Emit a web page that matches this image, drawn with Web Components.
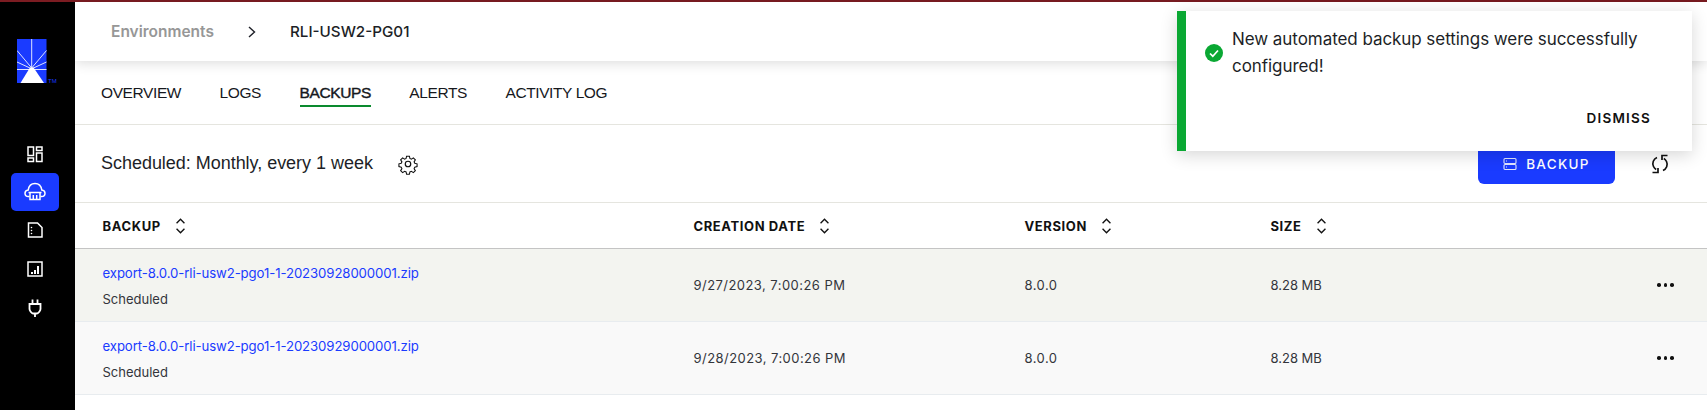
<!doctype html>
<html lang="en">
<head>
<meta charset="utf-8">
<title>Backups</title>
<style>
  html, body { margin: 0; height: 100%; overflow: hidden; background: #fff; }
  body { font-family: Inter, "Liberation Sans", sans-serif; color: #1d1f27; }
</style>
</head>
<body>
<app-shell>
  <side-nav slot="nav"></side-nav>
  <page-header>
    <span slot="parent">Environments</span>
    <span slot="current">RLI-USW2-PG01</span>
  </page-header>
  <tab-bar>
    <tab-item>OVERVIEW</tab-item>
    <tab-item>LOGS</tab-item>
    <tab-item active>BACKUPS</tab-item>
    <tab-item>ALERTS</tab-item>
    <tab-item>ACTIVITY LOG</tab-item>
  </tab-bar>
  <schedule-bar>Scheduled: Monthly, every 1 week</schedule-bar>
  <backup-table>
    <backup-row file="export-8.0.0-rli-usw2-pgo1-1-20230928000001.zip" date="9/27/2023, 7:00:26 PM" version="8.0.0" size="8.28 MB" shade="#f3f4f0"></backup-row>
    <backup-row file="export-8.0.0-rli-usw2-pgo1-1-20230929000001.zip" date="9/28/2023, 7:00:26 PM" version="8.0.0" size="8.28 MB" shade="#f9f9f9"></backup-row>
  </backup-table>
  <toast-notice>New automated backup settings were successfully configured!</toast-notice>
</app-shell>

<script>
  class AppShell extends HTMLElement {
    connectedCallback() {
      const root = this.attachShadow({ mode: "open" });
      root.innerHTML = `
        <style>
          :host { display: flex; flex-direction: column; height: 100vh; position: relative; }
          .stripe { height: 2px; background: #7c1c22; flex: none; }
          .body { display: flex; flex: 1; min-height: 0; }
          main { flex: 1; min-width: 0; display: flex; flex-direction: column; }
        </style>
        <div class="stripe"></div>
        <div class="body">
          <slot name="nav"></slot>
          <main><slot></slot></main>
        </div>
      `;
    }
  }

  class SideNav extends HTMLElement {
    connectedCallback() {
      const root = this.attachShadow({ mode: "open" });
      root.innerHTML = `
        <style>
          :host { display: flex; flex-direction: column; align-items: center; width: 75px; flex: none; background: #000; box-sizing: border-box; padding: 37px 5px 0 0; }
          .logo { display: block; width: 40px; height: 48px; margin: 0 0 48px 4px; }
          .item { width: 48px; height: 38px; border-radius: 5px; display: flex; align-items: center; justify-content: center; }
          .item.on { background: #1a3bff; }
          .item.wide { height: 38.500px; }
          .item.last { height: 40px; }
          svg.icon { width: 20px; height: 20px; fill: none; stroke: #fff; stroke-width: 1.500; }
        </style>
        <svg class="logo" viewBox="0 0 40 48">
          <rect x="0" y="0" width="29.500" height="44" fill="#1a3bff"/>
          <g stroke="#dfe4ff" stroke-width="1" fill="none">
            <path d="M14.700 0V29M0 11.500L14.700 29M29.500 11.500L14.700 29M0 23L14 29.500M29.500 23L15.400 29.500M0 30.500H29.500"/>
          </g>
          <path d="M13 28.500h3.500L27 44H3.500z" fill="#fff"/>
          <text x="31" y="44" font-family="Liberation Sans, sans-serif" font-size="6" fill="#1a3bff">TM</text>
        </svg>
        <div class="item">
          <svg class="icon" viewBox="0 0 20 20">
            <rect x="3" y="3" width="5.500" height="8.500"/><rect x="11.500" y="3" width="5.500" height="3.500"/>
            <rect x="3" y="14" width="5.500" height="3.500"/><rect x="11.500" y="9" width="5.500" height="8.500"/>
          </svg>
        </div>
        <div class="item on">
          <svg class="icon" style="width:22px;height:22px" viewBox="0 0 22 22">
            <path d="M5.500 15.500H4.500C2.500 15.500 1 14 1 12.200c0-1.700 1.400-3 3.200-3.200C4.800 5 7.500 2.500 11 2.500S17.200 5 17.800 9c1.800.2 3.200 1.500 3.200 3.200 0 1.800-1.500 3.300-3.500 3.300H16.500"/>
            <path d="M4.500 11.500H17.500M6 11.500V18.500H16V11.500M9.300 14V18.500M12.700 14V18.500"/>
          </svg>
        </div>
        <div class="item wide">
          <svg class="icon" viewBox="0 0 20 20">
            <path d="M3.500 3H12.500L17 7.500V17H3.500z"/>
            <path d="M6.500 7.500v.01M6.500 10.500v.01M6.500 13.500v.01" stroke-linecap="round" stroke-width="1.600"/>
          </svg>
        </div>
        <div class="item wide">
          <svg class="icon" viewBox="0 0 20 20">
            <rect x="3" y="3" width="14" height="14"/>
            <path d="M7 15v-2M10 15v-4M13 15V7" stroke-width="2"/>
          </svg>
        </div>
        <div class="item last">
          <svg class="icon" viewBox="0 0 20 20" style="stroke-width:1.800">
            <path d="M7.500 1.500V6M12.500 1.500V6M4.500 6H15.500V11C15.500 12.500 13.500 15.500 12 15.500H8C6.500 15.500 4.500 12.500 4.500 11zM10 15.500V19"/>
          </svg>
        </div>
      `;
    }
  }

  class PageHeader extends HTMLElement {
    connectedCallback() {
      const root = this.attachShadow({ mode: "open" });
      root.innerHTML = `
        <style>
          :host { display: flex; align-items: center; height: 59px; flex: none; padding-left: 36px; box-shadow: 0 2px 12px rgba(0,0,0,.14); position: relative; font-size: 15.500px; }
          .parent { color: #979797; font-weight: 600; width: 102px; }
          svg { width: 10px; height: 14px; margin: 0 33px 0 34px; fill: none; stroke: #1d1f27; stroke-width: 1.400; }
          .current { font-weight: 500; color: #1d1f27; font-size: 15.200px; }
        </style>
        <span class="parent"><slot name="parent"></slot></span>
        <svg viewBox="0 0 10 14"><path d="M2 2l5.500 5L2 12"/></svg>
        <span class="current"><slot name="current"></slot></span>
      `;
    }
  }

  class TabBar extends HTMLElement {
    connectedCallback() {
      const root = this.attachShadow({ mode: "open" });
      root.innerHTML = `
        <style>
          :host { display: flex; gap: 38.500px; height: 64px; flex: none; box-sizing: border-box; padding: 0 0 0 26px; border-bottom: 1px solid #e5e5df; }
        </style>
        <slot></slot>
      `;
    }
  }

  class TabItem extends HTMLElement {
    connectedCallback() {
      const root = this.attachShadow({ mode: "open" });
      root.innerHTML = `
        <style>
          :host { display: block; font: 15.500px/18px "Liberation Sans", Arial, sans-serif; color: #16181d; letter-spacing: -.4px; padding-top: 23px; }
          .label { display: block; padding-bottom: 3px; border-bottom: 2px solid transparent; }
          :host([active]) .label { border-bottom-color: #0a8a2e; -webkit-text-stroke: .4px #16181d; }
        </style>
        <span class="label"><slot></slot></span>
      `;
    }
  }

  class ScheduleBar extends HTMLElement {
    connectedCallback() {
      const root = this.attachShadow({ mode: "open" });
      root.innerHTML = `
        <style>
          :host { display: flex; align-items: center; height: 78px; flex: none; box-sizing: border-box; padding: 0 0 0 26px; border-bottom: 1px solid #e5e5df; }
          .label { font: 18px "Liberation Sans", Arial, sans-serif; color: #1d1f27; letter-spacing: -.03px; }
          .gear { width: 22px; height: 22px; margin-left: 24px; fill: none; stroke: #111; stroke-width: 1.300; }
          .backup { margin-left: auto; width: 137px; height: 41px; box-sizing: border-box; border: 0; border-radius: 6px; background: #1a3bff; color: #fff; display: flex; align-items: center; justify-content: center; gap: 9px; font: 500 13.500px Inter, "Liberation Sans", sans-serif; letter-spacing: 1.300px; }
          .backup svg { width: 14px; height: 14px; fill: none; stroke: #dfe4ff; stroke-width: 1.100; }
          .sync { width: 22px; height: 22px; margin: 0 36px 0 34px; fill: none; stroke: #111; stroke-width: 1.700; }
        </style>
        <span class="label"><slot></slot></span>
        <svg class="gear" viewBox="0 0 24 24">
          <path d="M10.300 2.500h3.400l.6 2.800 1.800.8 2.400-1.500 2.400 2.400-1.500 2.400.8 1.800 2.800.6v3.400l-2.800.6-.8 1.800 1.500 2.400-2.400 2.400-2.400-1.500-1.800.8-.6 2.800h-3.400l-.6-2.800-1.800-.8-2.400 1.500-2.400-2.400 1.500-2.400-.8-1.800-2.800-.6v-3.400l2.800-.6.8-1.800-1.500-2.400 2.400-2.400 2.400 1.500 1.800-.8z" transform="translate(1.200 1.200) scale(.9)"/>
          <circle cx="12" cy="12" r="3"/>
        </svg>
        <button class="backup">
          <svg viewBox="0 0 14 14"><rect x="1" y="1.500" width="12" height="5" rx="1"/><rect x="1" y="7.500" width="12" height="5" rx="1"/><path d="M3 4h1M3 10h1"/></svg>
          BACKUP
        </button>
        <svg class="sync" viewBox="0 0 22 22">
          <path d="M8 4.500C4.500 6 2.800 10 4.500 13.500c.6 1.200 1.500 2.300 2.700 3"/>
          <path d="M3.500 19.500H9V15"/>
          <path d="M14 17.500c3.500-1.500 5.200-5.500 3.500-9-.6-1.200-1.500-2.300-2.700-3"/>
          <path d="M18.500 2.500H13V7"/>
        </svg>
      `;
    }
  }

  const sortIcon = `<svg viewBox="0 0 10 16"><path d="M1.500 5.500L5 2l3.500 3.500M1.500 10.500L5 14l3.500-3.500"/></svg>`;

  class BackupTable extends HTMLElement {
    connectedCallback() {
      const root = this.attachShadow({ mode: "open" });
      root.innerHTML = `
        <style>
          :host { display: block; }
          .head { display: grid; grid-template-columns: 591px 331px 246px 1fr 50px; align-items: center; height: 45px; padding-left: 27.500px; border-bottom: 1px solid #c4c4c4; font-size: 13px; font-weight: 700; letter-spacing: .6px; color: #111; }
          .head span { display: flex; align-items: center; gap: 13px; }
          svg { width: 13px; height: 18px; fill: none; stroke: #111; stroke-width: 1.200; }
        </style>
        <div class="head">
          <span>BACKUP ${sortIcon}</span>
          <span>CREATION DATE ${sortIcon}</span>
          <span>VERSION ${sortIcon}</span>
          <span>SIZE ${sortIcon}</span>
        </div>
        <slot></slot>
      `;
    }
  }

  class BackupRow extends HTMLElement {
    connectedCallback() {
      const root = this.attachShadow({ mode: "open" });
      root.innerHTML = `
        <style>
          :host { display: grid; grid-template-columns: 591px 331px 246px 1fr 50px; align-items: center; height: 73px; box-sizing: border-box; padding-left: 27.500px; border-bottom: 1px solid #e8ecef; font-size: 13px; color: #33353b; background: ${this.getAttribute("shade")}; }
          a { display: block; color: #1a3bff; font-size: 13.200px; line-height: 18px; margin-bottom: 8px; padding-top: 1px; letter-spacing: -.1px; }
          .kind { display: block; font-size: 13px; line-height: 18px; }
          .wide { letter-spacing: .45px; }
          .dots { display: flex; gap: 3px; }
          .dots i { width: 3.500px; height: 3.500px; border-radius: 50%; background: #111; }
        </style>
        <div><a>${this.getAttribute("file")}</a><span class="kind">Scheduled</span></div>
        <div class="wide">${this.getAttribute("date")}</div>
        <div class="wide">${this.getAttribute("version")}</div>
        <div>${this.getAttribute("size")}</div>
        <div class="dots"><i></i><i></i><i></i></div>
      `;
    }
  }

  class ToastNotice extends HTMLElement {
    connectedCallback() {
      const root = this.attachShadow({ mode: "open" });
      root.innerHTML = `
        <style>
          :host { position: absolute; left: 1177px; top: 11px; width: 515px; height: 140px; box-sizing: border-box; background: #fff; border-left: 9px solid #0aa833; box-shadow: 0 4px 16px rgba(0,0,0,.16); display: flex; flex-direction: column; padding: 15px 12px 0 19px; }
          .msg { display: flex; align-items: center; gap: 9px; font-size: 17px; line-height: 27px; color: #1d1f27; letter-spacing: -.06px; }
          .msg svg { width: 18px; height: 18px; flex: none; }
          .dismiss { align-self: flex-end; margin: 30px 29px 0 0; font-size: 13.500px; font-weight: 600; letter-spacing: 1.200px; color: #111; }
        </style>
        <div class="msg">
          <svg viewBox="0 0 18 18"><circle cx="9" cy="9" r="9" fill="#0aa833"/><path d="M5 9.500l2.800 2.700L13 6.500" fill="none" stroke="#fff" stroke-width="1.700"/></svg>
          <span><slot></slot></span>
        </div>
        <div class="dismiss">DISMISS</div>
      `;
    }
  }

  customElements.define("app-shell", AppShell);
  customElements.define("side-nav", SideNav);
  customElements.define("page-header", PageHeader);
  customElements.define("tab-bar", TabBar);
  customElements.define("tab-item", TabItem);
  customElements.define("schedule-bar", ScheduleBar);
  customElements.define("backup-table", BackupTable);
  customElements.define("backup-row", BackupRow);
  customElements.define("toast-notice", ToastNotice);
</script>
</body>
</html>
